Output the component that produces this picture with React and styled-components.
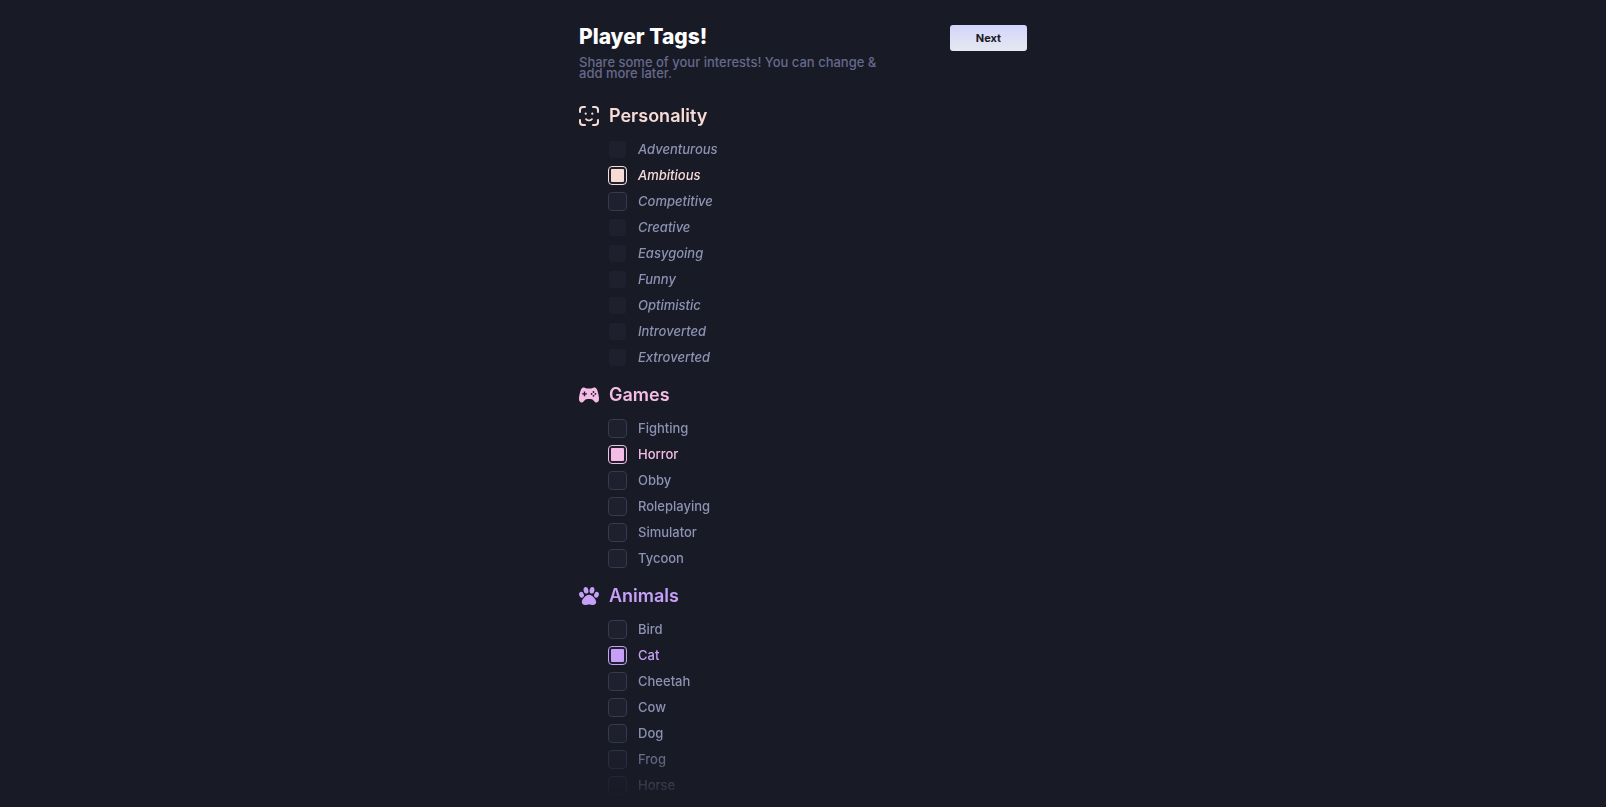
import { useState } from "react";
import styled, { createGlobalStyle } from "styled-components";

const GlobalStyle = createGlobalStyle`
  * {
    box-sizing: border-box;
  }

  body {
    margin: 0;
    background: #181a26;
    font-family: Inter, "Open Sans", sans-serif;
  }
`;

const Page = styled.main`
  display: flex;
  flex-direction: column;
  height: 100vh;
  padding: 0 20px 4px;
  overflow: hidden;
  background: #181a26;
`;

const Column = styled.div`
  display: flex;
  flex: 1;
  flex-direction: column;
  width: 100%;
  max-width: 448px;
  min-height: 0;
  margin: 0 auto;
`;

const Header = styled.header`
  display: flex;
  justify-content: space-between;
  align-items: flex-start;
  padding-top: 25px;
`;

const Title = styled.h1`
  margin: 0 0 8px;
  color: #ffffff;
  font-size: 21px;
  font-weight: 800;
  line-height: 24px;
`;

const Subtitle = styled.p`
  max-width: 304px;
  margin: 0;
  color: #66698a;
  font-size: 13px;
  font-weight: 500;
  line-height: 11px;
`;

const NextButton = styled.button`
  width: 77px;
  height: 26px;
  padding: 0;
  border: 0;
  border-radius: 3px;
  background: linear-gradient(#d3d4fb, #e6e9f0);
  color: #181a26;
  font-family: inherit;
  font-size: 11px;
  font-weight: 700;
  cursor: pointer;
`;

const TagList = styled.div`
  flex: 1;
  min-height: 0;
  margin-top: 21px;
  overflow: hidden;
  mask-image: linear-gradient(to top, transparent, #000 68px);
`;

const Section = styled.section`
  margin-bottom: 9px;
  color: ${(props) => props.$color};
`;

const SectionHeader = styled.div`
  display: flex;
  align-items: center;
  gap: 10px;
  height: 32px;

  svg {
    display: block;
    width: 20px;
    height: 20px;
  }
`;

const SectionTitle = styled.h2`
  margin: 0;
  font-size: 18px;
  font-weight: 600;
  line-height: 24px;
`;

const Options = styled.ul`
  margin: 0;
  padding: 4px 0 0 29px;
  list-style: none;
`;

const Option = styled.li`
  height: 26px;
`;

const OptionLabel = styled.label`
  display: inline-flex;
  align-items: center;
  gap: 11px;
  height: 26px;
  color: ${(props) => (props.$checked ? "inherit" : "#8d92b3")};
  font-size: 13px;
  font-style: ${(props) => (props.$italic ? "italic" : "normal")};
  font-weight: 500;
  line-height: 16px;
  cursor: pointer;
`;

const Checkbox = styled.input`
  appearance: none;
  width: 19px;
  height: 19px;
  margin: 0;
  border: 1px solid ${(props) => (props.$plain ? "transparent" : "#373950")};
  border-radius: 4px;
  background: #1e202e;
  background-clip: padding-box;
  color: inherit;
  cursor: pointer;

  &:checked {
    padding: 2px;
    border-color: currentColor;
    background: linear-gradient(currentColor, currentColor) content-box, #1e202e;
  }
`;

const FaceIcon = () => (
  <svg viewBox="0 0 20 20" fill="none" stroke="currentColor" strokeWidth="2" strokeLinecap="round" aria-hidden="true">
    <path d="M1 6V4a3 3 0 0 1 3-3h2M14 1h2a3 3 0 0 1 3 3v2M19 14v2a3 3 0 0 1-3 3h-2M6 19H4a3 3 0 0 1-3-3v-2" />
    <path d="M7 13.2c1.6 1.7 4.4 1.7 6 0" strokeWidth="1.7" />
    <g fill="currentColor" stroke="none">
      <circle cx="6.7" cy="7.7" r="1.1" />
      <circle cx="13.3" cy="7.7" r="1.1" />
    </g>
  </svg>
);

const GamepadIcon = () => (
  <svg viewBox="0 0 20 20" fill="currentColor" aria-hidden="true">
    <path d="M5 2.5c1.2 0 1.6.9 2.8.9h4.400c1.200 0 1.600-.9 2.800-.9 1.500 0 2.400.6 3 2.100 1.200 3.100 2 6.800 2 9.500 0 2.200-1.100 3.400-2.700 3.400-2.200 0-2.500-2.900-4.600-3.300-1.800-.3-3.600-.3-5.400 0-2.100.4-2.400 3.300-4.600 3.300C1.100 17.500 0 16.300 0 14.100c0-2.700.8-6.400 2-9.500C2.600 3.100 3.500 2.500 5 2.500Z" />
    <path d="M5.500 6.500v4.800M3.100 8.900h4.800" stroke="#181a26" strokeWidth="1.4" />
    <g fill="#181a26">
      <circle cx="14.500" cy="7" r=".9" />
      <circle cx="14.500" cy="10.800" r=".9" />
      <circle cx="12.600" cy="8.900" r=".9" />
      <circle cx="16.400" cy="8.900" r=".9" />
    </g>
  </svg>
);

const PawIcon = () => (
  <svg viewBox="0 0 20 20" fill="currentColor" aria-hidden="true">
    <ellipse cx="7" cy="4.300" rx="2.400" ry="3.300" transform="rotate(-10 7 4.300)" />
    <ellipse cx="13" cy="4.300" rx="2.400" ry="3.300" transform="rotate(10 13 4.300)" />
    <ellipse cx="2.500" cy="8.700" rx="2.300" ry="3" transform="rotate(-20 2.500 8.700)" />
    <ellipse cx="17.500" cy="8.700" rx="2.300" ry="3" transform="rotate(20 17.500 8.700)" />
    <path d="M10 8.800c3.200 0 7.200 4.600 7.200 7.200 0 2-1.600 2.900-3.400 2.900-1.500 0-2.300-.5-3.800-.5s-2.300.5-3.800.5c-1.800 0-3.400-.9-3.400-2.900 0-2.600 4-7.200 7.200-7.200Z" />
  </svg>
);

const sections = [
  {
    title: "Personality",
    color: "#f7dcd6",
    icon: <FaceIcon />,
    italic: true,
    tags: [
      "Adventurous",
      "Ambitious",
      "Competitive",
      "Creative",
      "Easygoing",
      "Funny",
      "Optimistic",
      "Introverted",
      "Extroverted",
    ],
  },
  {
    title: "Games",
    color: "#f5bde6",
    icon: <GamepadIcon />,
    tags: ["Fighting", "Horror", "Obby", "Roleplaying", "Simulator", "Tycoon"],
  },
  {
    title: "Animals",
    color: "#c6a0f6",
    icon: <PawIcon />,
    tags: ["Bird", "Cat", "Cheetah", "Cow", "Dog", "Frog", "Horse"],
  },
];

const App = () => {
  const [selected, setSelected] = useState(["Ambitious", "Horror", "Cat"]);

  const toggleTag = (tag) => {
    if (selected.includes(tag)) {
      setSelected(selected.filter((item) => item !== tag));
    } else {
      setSelected([...selected, tag]);
    }
  };

  return (
    <Page>
      <GlobalStyle />
      <Column>
        <Header>
          <div>
            <Title>Player Tags!</Title>
            <Subtitle>
              Share some of your interests! You can change & add more later.
            </Subtitle>
          </div>
          <NextButton type="button">Next</NextButton>
        </Header>
        <TagList>
          {sections.map((section) => (
            <Section key={section.title} $color={section.color}>
              <SectionHeader>
                {section.icon}
                <SectionTitle>{section.title}</SectionTitle>
              </SectionHeader>
              <Options>
                {section.tags.map((tag) => (
                  <Option key={tag}>
                    <OptionLabel
                      $checked={selected.includes(tag)}
                      $italic={section.italic}
                    >
                      <Checkbox
                        type="checkbox"
                        checked={selected.includes(tag)}
                        onChange={() => toggleTag(tag)}
                        $plain={section.italic && tag !== "Competitive"}
                      />
                      {tag}
                    </OptionLabel>
                  </Option>
                ))}
              </Options>
            </Section>
          ))}
        </TagList>
      </Column>
    </Page>
  );
};

export default App;
